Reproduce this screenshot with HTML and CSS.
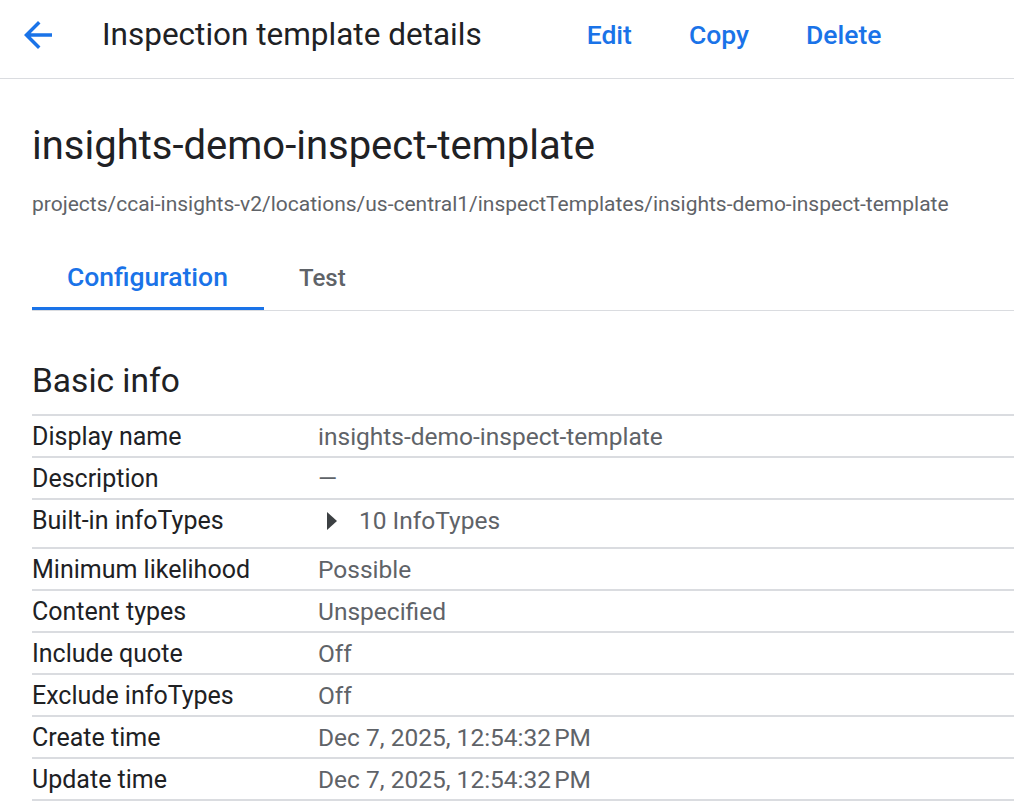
FILE: index.html
```html
<!DOCTYPE html>
<html>
<head>
<meta charset="utf-8">
<link rel="stylesheet" href="styles.css">
</head>
<body>
<header class="topbar">
  <button class="back" aria-label="Back">
    <svg width="42" height="42" viewBox="0 0 24 24"><path d="M20 11H7.83l5.59-5.59L12 4l-8 8 8 8 1.41-1.41L7.83 13H20v-2z" fill="#1a73e8"/></svg>
  </button>
  <div class="page-title">Inspection template details</div>
  <nav class="actions">
    <a class="action">Edit</a>
    <a class="action">Copy</a>
    <a class="action">Delete</a>
  </nav>
</header>
<main class="content">
  <h1 class="name">insights-demo-inspect-template</h1>
  <div class="path">projects/ccai-insights-v2/locations/us-central1/inspectTemplates/insights-demo-inspect-template</div>
  <div class="tabs">
    <div class="tab active">Configuration</div>
    <div class="tab">Test</div>
  </div>
  <h2 class="section">Basic info</h2>
  <div class="table">
    <div class="row"><div class="label">Display name</div><div class="value">insights-demo-inspect-template</div></div>
    <div class="row"><div class="label">Description</div><div class="value">—</div></div>
    <div class="row tall"><div class="label">Built-in infoTypes</div><div class="value expand"><span class="caret"></span>10 InfoTypes</div></div>
    <div class="row"><div class="label">Minimum likelihood</div><div class="value">Possible</div></div>
    <div class="row"><div class="label">Content types</div><div class="value">Unspecified</div></div>
    <div class="row"><div class="label">Include quote</div><div class="value">Off</div></div>
    <div class="row"><div class="label">Exclude infoTypes</div><div class="value">Off</div></div>
    <div class="row"><div class="label">Create time</div><div class="value">Dec 7, 2025, 12:54:32&#8239;PM</div></div>
    <div class="row"><div class="label">Update time</div><div class="value">Dec 7, 2025, 12:54:32&#8239;PM</div></div>
  </div>
</main>
</body>
</html>
```
FILE: styles.css
```css
* { box-sizing: border-box; }
html, body { margin: 0; padding: 0; background: #fff; }
body { font-family: Roboto, "Noto Sans", Arial, sans-serif; color: #202124; overflow: hidden; }

.topbar {
  height: 79px;
  display: flex;
  align-items: center;
  border-bottom: 1px solid #dadce0;
  padding-left: 17px;
  padding-bottom: 9px;
}
.back {
  width: 42px; height: 42px; padding: 0; border: 0; background: none;
  display: flex; align-items: center; justify-content: center;
}
.page-title {
  margin-left: 43px;
  font-size: 31.5px;
  color: #202124;
}
.actions { display: flex; margin-left: 105px; }
.action {
  color: #1a73e8;
  font-size: 26.5px;
  font-weight: 500;
  margin-right: 57px;
}

.content { padding-left: 32px; }
.name {
  margin: 0;
  padding-top: 43px;
  font-size: 40px;
  font-weight: 400;
  line-height: 48px;
  color: #202124;
}
.path {
  margin-top: 22px;
  font-size: 21px;
  color: #5f6368;
  line-height: 24px;
}
.tabs {
  margin-top: 30px;
  display: flex;
  border-bottom: 1px solid #dadce0;
  height: 65px;
}
.tab {
  font-size: 24px;
  font-weight: 500;
  color: #5f6368;
  padding: 0 35px;
  display: flex;
  align-items: center;
  height: 64px;
}
.tab.active {
  color: #1a73e8;
  font-size: 26.5px;
  border-bottom: 3px solid #1a73e8;
  width: 232px;
}
.section {
  margin: 50px 0 0;
  font-size: 33.5px;
  font-weight: 400;
  line-height: 40px;
  color: #202124;
}
.table {
  margin-top: 13px;
  border-top: 2px solid #dadce0;
}
.row {
  display: flex;
  align-items: center;
  height: 42px;
  border-bottom: 2px solid #dadce0;
}
.row.tall { height: 49px; padding-bottom: 6px; }
.label { width: 286px; color: #202124; font-size: 25px; }
.value { color: #5f6368; font-size: 24.5px; }
.expand { display: flex; align-items: center; padding-left: 9px; }
.caret {
  width: 0; height: 0;
  border-top: 9px solid transparent;
  border-bottom: 9px solid transparent;
  border-left: 10px solid #3c4043;
  margin-right: 22px;
}
```
